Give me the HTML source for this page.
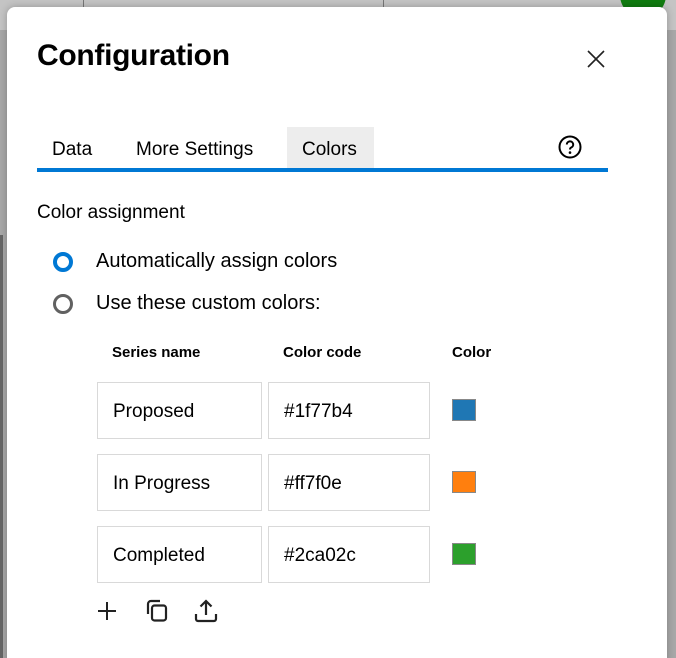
<!DOCTYPE html>
<html><head><meta charset="utf-8"><style>
html,body{margin:0;padding:0;width:676px;height:658px;overflow:hidden;}
body{background:#a8a8a8;position:relative;font-family:"Liberation Sans",sans-serif;color:#000;}
.bgtop{position:absolute;left:0;top:0;width:676px;height:30px;background:#c4c4c4;}
.vl{position:absolute;top:0;width:1px;height:8px;background:#777;}
.dark{position:absolute;left:0;top:235px;width:3px;height:423px;background:#666;}
.green{position:absolute;left:620px;top:-28px;width:46px;height:46px;border-radius:50%;background:#107c10;}
.dlg{position:absolute;left:7px;top:7px;width:660px;height:660px;background:#fff;border-radius:8px;box-shadow:0 0 8px rgba(0,0,0,.25);}
.t{position:absolute;white-space:nowrap;}
.title{left:30px;top:32px;font-size:30px;font-weight:bold;letter-spacing:-0.3px;}
.tab{top:132px;font-size:19px;}
.seltab{position:absolute;left:280px;top:120px;width:87px;height:42px;background:#ededed;}
.uline{position:absolute;left:30px;top:161px;width:571px;height:4px;background:#0078d4;}
.h{font-size:19px;}
.radio{position:absolute;width:12px;height:12px;border-radius:50%;}
.th{font-size:15px;font-weight:bold;top:337px;}
.inp{position:absolute;height:57px;border:1px solid #d9d9d9;box-sizing:border-box;font-size:19px;line-height:57px;padding-left:15px;}
.sw{position:absolute;width:24px;height:22px;border:1px solid #888;box-sizing:border-box;}
</style></head><body>
<div class="bgtop"></div>
<div class="vl" style="left:83px"></div><div class="vl" style="left:383px"></div>
<div class="dark"></div>
<div class="green"></div>
<div class="dlg">
  <div class="t title">Configuration</div>
  <svg style="position:absolute;left:580px;top:43px" width="18" height="18" viewBox="0 0 18 18"><path d="M1 1L17 17M17 1L1 17" stroke="#222" stroke-width="1.6"/></svg>
  <div class="seltab"></div>
  <div class="t tab" style="left:45px">Data</div>
  <div class="t tab" style="left:129px">More Settings</div>
  <div class="t tab" style="left:295px">Colors</div>
  <svg style="position:absolute;left:551px;top:128px" width="24" height="24" viewBox="0 0 24 24"><circle cx="12" cy="12" r="10.5" fill="none" stroke="#000" stroke-width="2"/><path d="M8.8 9.5a3.2 3.2 0 1 1 4.4 3c-.9.4-1.2 1-1.2 2" fill="none" stroke="#000" stroke-width="2"/><circle cx="12" cy="17.6" r="1.3"/></svg>
  <div class="uline"></div>
  <div class="t h" style="left:30px;top:195px">Color assignment</div>
  <div class="radio" style="left:46px;top:245px;border:4px solid #0078d4"></div>
  <div class="t" style="left:89px;top:243px;font-size:20px">Automatically assign colors</div>
  <div class="radio" style="left:46px;top:287px;border:3px solid #616161;width:14px;height:14px"></div>
  <div class="t" style="left:89px;top:285px;font-size:20px">Use these custom colors:</div>
  <div class="t th" style="left:105px">Series name</div>
  <div class="t th" style="left:276px">Color code</div>
  <div class="t th" style="left:445px">Color</div>

  <div class="inp" style="left:90px;top:375px;width:165px">Proposed</div>
  <div class="inp" style="left:261px;top:375px;width:162px">#1f77b4</div>
  <div class="sw" style="left:445px;top:392px;background:#1f77b4"></div>

  <div class="inp" style="left:90px;top:447px;width:165px">In Progress</div>
  <div class="inp" style="left:261px;top:447px;width:162px">#ff7f0e</div>
  <div class="sw" style="left:445px;top:464px;background:#ff7f0e"></div>

  <div class="inp" style="left:90px;top:519px;width:165px">Completed</div>
  <div class="inp" style="left:261px;top:519px;width:162px">#2ca02c</div>
  <div class="sw" style="left:445px;top:536px;background:#2ca02c"></div>

  <svg style="position:absolute;left:90px;top:594px" width="20" height="20" viewBox="0 0 20 20"><path d="M10 1V19M1 10H19" stroke="#222" stroke-width="2"/></svg>
  <svg style="position:absolute;left:136px;top:590px" width="28" height="28" viewBox="0 0 28 28"><path d="M5 17V7a3 3 0 0 1 3-3h9" fill="none" stroke="#222" stroke-width="2.2"/><rect x="9" y="8.5" width="14" height="15" rx="2.5" fill="none" stroke="#222" stroke-width="2.2"/></svg>
  <svg style="position:absolute;left:185px;top:590px" width="28" height="28" viewBox="0 0 28 28"><path d="M14 18V4M8.5 9.5L14 4l5.5 5.5M4 17v5a2 2 0 0 0 2 2h16a2 2 0 0 0 2-2v-5" fill="none" stroke="#222" stroke-width="2.2"/></svg>
</div>
</body></html>
